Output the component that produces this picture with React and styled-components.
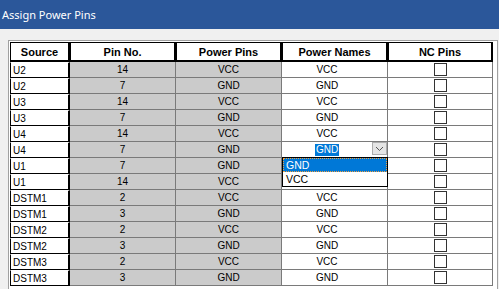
import React from 'react';
import styled, { createGlobalStyle } from 'styled-components';

const rows = [
  ['U2', '14', 'VCC', 'VCC'],
  ['U2', '7', 'GND', 'GND'],
  ['U3', '14', 'VCC', 'VCC'],
  ['U3', '7', 'GND', 'GND'],
  ['U4', '14', 'VCC', 'VCC'],
  ['U4', '7', 'GND', 'GND', true],
  ['U1', '7', 'GND', ''],
  ['U1', '14', 'VCC', ''],
  ['DSTM1', '2', 'VCC', 'VCC'],
  ['DSTM1', '3', 'GND', 'GND'],
  ['DSTM2', '2', 'VCC', 'VCC'],
  ['DSTM2', '3', 'GND', 'GND'],
  ['DSTM3', '2', 'VCC', 'VCC'],
  ['DSTM3', '3', 'GND', 'GND'],
];

export default function App() {
  return (
    <>
      <Global />
      <Window>
        <TitleBar>Assign Power Pins</TitleBar>
        <Body>
          <Frame>
            <Grid>
              <Head>Source</Head>
              <Head>Pin No.</Head>
              <Head>Power Pins</Head>
              <Head>Power Names</Head>
              <Head>NC Pins</Head>
              {rows.map(([src, pin, pp, name, open], i) => (
                <React.Fragment key={i}>
                  <SourceCell>{src}</SourceCell>
                  <Cell $gray>{pin}</Cell>
                  <Cell $gray>{pp}</Cell>
                  <NameCell>
                    {open ? <Selected>{name}</Selected> : name}
                    {open && (
                      <>
                        <DropButton>
                          <svg width="9" height="6" viewBox="0 0 9 6">
                            <polyline points="1,1 4.5,4.5 8,1" fill="none" stroke="#555" strokeWidth="1" />
                          </svg>
                        </DropButton>
                        <List>
                          <Item $active>GND</Item>
                          <Item>VCC</Item>
                        </List>
                      </>
                    )}
                  </NameCell>
                  <Cell>
                    <Check />
                  </Cell>
                </React.Fragment>
              ))}
            </Grid>
          </Frame>
        </Body>
      </Window>
    </>
  );
}

const Global = createGlobalStyle`
  html, body { margin: 0; padding: 0; background: #f0f0f0; overflow: hidden; }
`;
const Window = styled.div`
  display: flex;
  flex-direction: column;
  width: 499px;
  height: 289px;
  overflow: hidden;
`;
const TitleBar = styled.div`
  height: 29px;
  flex: none;
  display: flex;
  align-items: center;
  padding-left: 2px;
  background: #2b579a;
  color: #fff;
  font-family: 'Noto Sans', sans-serif;
  font-size: 11px;
`;
const Body = styled.div`
  padding: 11px 1px 0 8px;
`;
const Frame = styled.div`
  border: 1px solid #a0a0a0;
  border-bottom: none;
  padding: 1px 0 0 1px;
  background: #fff;
  height: 260px;
`;
const Grid = styled.div`
  display: grid;
  grid-template-columns: 60px 106px 106px 106px 105px;
  grid-template-rows: 20px;
  grid-auto-rows: 16px;
  font-family: 'Liberation Sans', Arial, sans-serif;
  font-size: 10px;
  color: #000;
`;
const Head = styled.div`
  box-sizing: border-box;
  display: flex;
  align-items: center;
  justify-content: center;
  background: #fff;
  border-top: 1px solid #000;
  border-left: 1px solid #000;
  border-right: 2px solid #000;
  border-bottom: 2px solid #000;
  font-weight: bold;
  font-size: 11px;
`;
const SourceCell = styled.div`
  box-sizing: border-box;
  display: flex;
  align-items: center;
  padding-left: 2px;
  background: #fff;
  border-top: 1px solid #fff;
  border-left: 1px solid #000;
  border-right: 2px solid #000;
  border-bottom: 1px solid #000;
`;
const Cell = styled.div`
  box-sizing: border-box;
  display: flex;
  align-items: center;
  justify-content: center;
  background: ${(p) => (p.$gray ? '#cbcbcb' : '#fff')};
  border-right: 1px solid #7a7a7a;
  border-bottom: 1px solid #7a7a7a;
`;
const NameCell = styled(Cell)`
  position: relative;
  padding-right: 15px;
`;
const Selected = styled.span`
  background: #0078d7;
  color: #fff;
  padding: 0 1px;
  line-height: 12px;
`;
const DropButton = styled.div`
  position: absolute;
  right: 0;
  top: 0;
  width: 15px;
  height: 13px;
  box-sizing: border-box;
  border: 1px solid #adadad;
  background: #e5e5e5;
  display: flex;
  align-items: center;
  justify-content: center;
`;
const List = styled.div`
  position: absolute;
  left: 0;
  top: 15px;
  width: 106px;
  box-sizing: border-box;
  border: 1px solid #000;
  background: #fff;
  z-index: 2;
`;
const Item = styled.div`
  height: 14px;
  box-sizing: border-box;
  display: flex;
  align-items: center;
  padding-left: 3px;
  font-size: 10.5px;
  background: ${(p) => (p.$active ? '#0078d7' : '#fff')};
  color: ${(p) => (p.$active ? '#fff' : '#000')};
  outline: ${(p) => (p.$active ? '1px dotted #f0a040' : 'none')};
  outline-offset: -1px;
`;
const Check = styled.div`
  width: 13px;
  height: 13px;
  box-sizing: border-box;
  border: 1px solid #333;
  background: #fff;
`;
